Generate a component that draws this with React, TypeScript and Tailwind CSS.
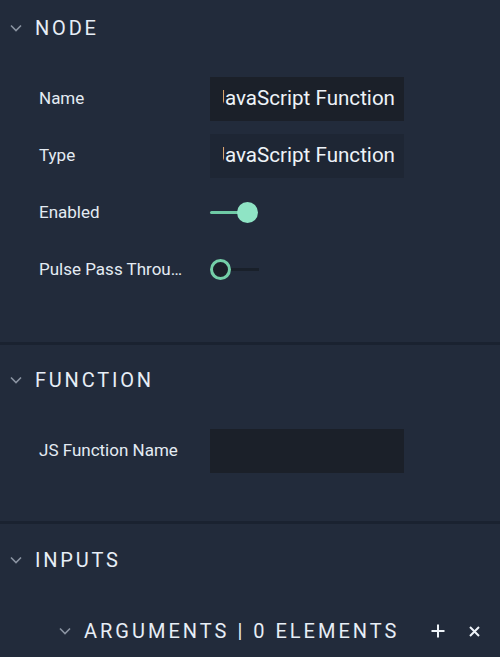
import React from "react";

const Chevron = () => (
  <svg width="12" height="8" viewBox="0 0 12 8" className="shrink-0">
    <path d="M1 1.5 L6 6.5 L11 1.5" fill="none" stroke="#8a93a1" strokeWidth="1.6" />
  </svg>
);

const Header = ({ title, h }: { title: string; h: string }) => (
  <div className={`flex items-center ${h}`}>
    <div className="w-[35px] flex justify-center pl-[1px] pr-[4px]">
      <Chevron />
    </div>
    <span className="text-[20px] tracking-[2.8px] text-[#e7eef6] leading-none">{title}</span>
  </div>
);

const Row = ({ label, children }: { label: string; children: React.ReactNode }) => (
  <div className="flex items-center h-[57px]">
    <div className="w-[210px] pl-[39px] text-[17px] text-[#e4ebf3] whitespace-nowrap">{label}</div>
    {children}
  </div>
);

const TextBox = ({ value, bg }: { value: string; bg: string }) => (
  <div className={`w-[194px] h-[44px] ${bg} flex items-center pl-[13px] pr-[9px]`}>
    <div className="flex-1 flex justify-end overflow-hidden whitespace-nowrap">
      <span className="text-[20.6px] text-[#eef3f8] shrink-0">{value}</span>
    </div>
  </div>
);

export default function App() {
  return (
    <div className="w-[500px] h-[657px] bg-[#222b3b] overflow-hidden" style={{ fontFamily: "Roboto, 'Noto Sans', sans-serif" }}>
      {/* NODE */}
      <div className="pb-[44px]">
        <Header title="NODE" h="h-[56px]" />
        <div className="h-[14px]" />
        <Row label="Name">
          <TextBox value="JavaScript Function" bg="bg-[#1b2029]" />
        </Row>
        <Row label="Type">
          <TextBox value="JavaScript Function" bg="bg-[#1e2634]" />
        </Row>
        <Row label="Enabled">
          <div className="relative w-[50px] h-[22px] flex items-center">
            <div className="h-[3px] w-[38px] bg-[#6fcaa5] rounded-full" />
            <div className="absolute left-[27px] top-[0.5px] w-[21px] h-[21px] rounded-full bg-[#8fe4c5]" />
          </div>
        </Row>
        <Row label="Pulse Pass Throu…">
          <div className="relative w-[50px] h-[22px] flex items-center">
            <div className="absolute left-[18px] w-[31px] h-[3px] bg-[#19202a]" />
            <div className="absolute left-0 top-[0.5px] w-[21px] h-[21px] rounded-full bg-[#1b2029] border-[3px] border-[#74cfa8]" />
          </div>
        </Row>
      </div>
      <div className="h-[3px] bg-[#1a2230]" />
      {/* FUNCTION */}
      <div className="pb-[42px]">
        <Header title="FUNCTION" h="h-[70px]" />
        <div className="h-[7px]" />
        <Row label="JS Function Name">
          <TextBox value="" bg="bg-[#1b2029]" />
        </Row>
      </div>
      <div className="h-[3px] bg-[#1a2230]" />
      {/* INPUTS */}
      <div>
        <Header title="INPUTS" h="h-[72px]" />
        <div className="flex items-center h-[70px] pl-[58px] pr-[20px]">
          <div className="w-[26px] flex justify-start pl-[1px]">
            <Chevron />
          </div>
          <span className="text-[20px] tracking-[3px] text-[#e7eef6] leading-none whitespace-nowrap">
            ARGUMENTS | 0 ELEMENTS
          </span>
          <div className="flex-1" />
          <svg width="14" height="14" viewBox="0 0 14 14" className="mr-[24px]">
            <path d="M7 0.5 V13.5 M0.5 7 H13.5" stroke="#eef3f8" strokeWidth="2" />
          </svg>
          <svg width="11" height="11" viewBox="0 0 11 11">
            <path d="M1 1 L10 10 M10 1 L1 10" stroke="#eef3f8" strokeWidth="2" />
          </svg>
        </div>
      </div>
    </div>
  );
}
